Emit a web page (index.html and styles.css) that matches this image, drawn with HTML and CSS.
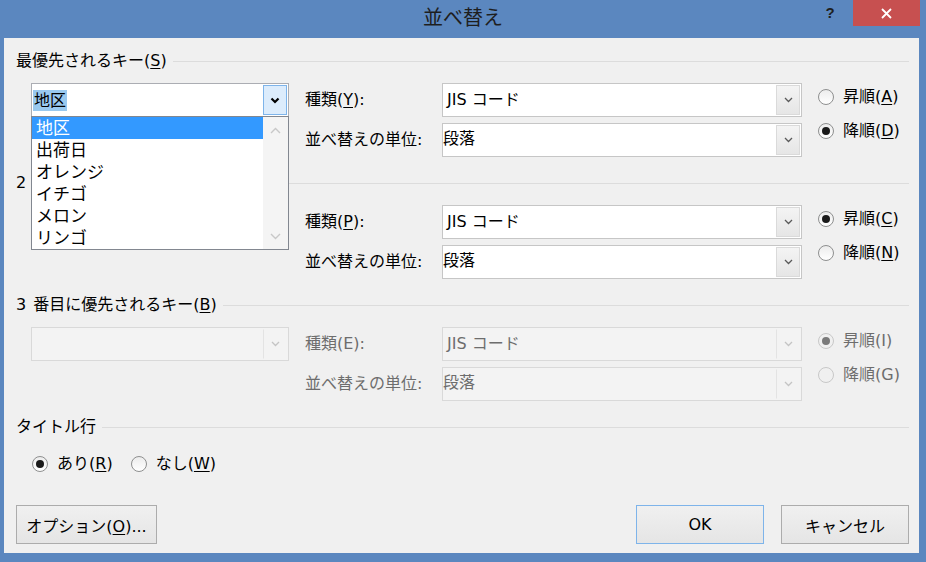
FILE: index.html
```html
<!DOCTYPE html>
<html lang="ja">

<head>
    <meta charset="UTF-8">
    <title>並べ替え</title>
    <link rel="stylesheet" href="styles.css">
</head>

<body>
    <div class="titlebar">
        <div></div>
        <div class="title">並べ替え</div>
        <div class="caption-buttons">
            <span class="help">?</span>
            <span class="close">
                <svg width="11" height="11" viewBox="0 0 11 11"><path d="M1 1L10 10M10 1L1 10" stroke="#fff" stroke-width="1.8" /></svg>
            </span>
        </div>
    </div>

    <div class="client">
        <!-- 1st key -->
        <section class="sort-key">
            <div class="group-heading"><span>最優先されるキー(<u>S</u>)</span></div>
            <div class="key-grid">
                <div class="combo combo-focus key-column">
                    <div class="combo-value"><span class="selected-text">地区</span></div>
                    <div class="combo-arrow">
                        <svg width="10" height="7" viewBox="0 0 10 7"><path d="M1.5 1.5l3.5 3.5l3.5-3.5" fill="none" stroke="currentColor" stroke-width="2.2" /></svg>
                    </div>
                    <div class="dropdown-list">
                        <div class="list-items">
                            <div class="list-item active">地区</div>
                            <div class="list-item">出荷日</div>
                            <div class="list-item">オレンジ</div>
                            <div class="list-item">イチゴ</div>
                            <div class="list-item">メロン</div>
                            <div class="list-item">リンゴ</div>
                        </div>
                        <div class="list-scroll">
                            <svg width="11" height="7" viewBox="0 0 11 7"><path d="M1 6l4.5-4.5L10 6" fill="none" stroke="#c8c8c8" stroke-width="1.4" /></svg>
                            <svg width="11" height="7" viewBox="0 0 11 7"><path d="M1 1l4.5 4.5L10 1" fill="none" stroke="#c8c8c8" stroke-width="1.4" /></svg>
                        </div>
                    </div>
                </div>
                <div class="field-label">種類(<u>Y</u>):</div>
                <div class="combo">
                    <div class="combo-value">JIS コード</div>
                    <div class="combo-arrow"><svg width="9" height="6" viewBox="0 0 9 6"><path d="M1 1l3.5 3.5L8 1" fill="none" stroke="currentColor" stroke-width="1.3" /></svg></div>
                </div>
                <div class="order-options">
                    <div class="radio"><span class="radio-mark"></span>昇順(<u>A</u>)</div>
                    <div class="radio checked"><span class="radio-mark"></span>降順(<u>D</u>)</div>
                </div>
                <div class="field-label">並べ替えの単位:</div>
                <div class="combo">
                    <div class="combo-value flush">段落</div>
                    <div class="combo-arrow"><svg width="9" height="6" viewBox="0 0 9 6"><path d="M1 1l3.5 3.5L8 1" fill="none" stroke="currentColor" stroke-width="1.3" /></svg></div>
                </div>
            </div>
        </section>

        <!-- 2nd key -->
        <section class="sort-key">
            <div class="group-heading"><span>2 番目に優先されるキー(<u>T</u>)</span></div>
            <div class="key-grid">
                <div class="combo key-column">
                    <div class="combo-value">出荷日</div>
                    <div class="combo-arrow"><svg width="9" height="6" viewBox="0 0 9 6"><path d="M1 1l3.5 3.5L8 1" fill="none" stroke="currentColor" stroke-width="1.3" /></svg></div>
                </div>
                <div class="field-label">種類(<u>P</u>):</div>
                <div class="combo">
                    <div class="combo-value">JIS コード</div>
                    <div class="combo-arrow"><svg width="9" height="6" viewBox="0 0 9 6"><path d="M1 1l3.5 3.5L8 1" fill="none" stroke="currentColor" stroke-width="1.3" /></svg></div>
                </div>
                <div class="order-options">
                    <div class="radio checked"><span class="radio-mark"></span>昇順(<u>C</u>)</div>
                    <div class="radio"><span class="radio-mark"></span>降順(<u>N</u>)</div>
                </div>
                <div class="field-label">並べ替えの単位:</div>
                <div class="combo">
                    <div class="combo-value flush">段落</div>
                    <div class="combo-arrow"><svg width="9" height="6" viewBox="0 0 9 6"><path d="M1 1l3.5 3.5L8 1" fill="none" stroke="currentColor" stroke-width="1.3" /></svg></div>
                </div>
            </div>
        </section>

        <!-- 3rd key (disabled) -->
        <section class="sort-key">
            <div class="group-heading"><span>3 番目に優先されるキー(<u>B</u>)</span></div>
            <div class="key-grid disabled">
                <div class="combo key-column">
                    <div class="combo-value"></div>
                    <div class="combo-arrow"><svg width="9" height="6" viewBox="0 0 9 6"><path d="M1 1l3.5 3.5L8 1" fill="none" stroke="currentColor" stroke-width="1.3" /></svg></div>
                </div>
                <div class="field-label">種類(E):</div>
                <div class="combo">
                    <div class="combo-value">JIS コード</div>
                    <div class="combo-arrow"><svg width="9" height="6" viewBox="0 0 9 6"><path d="M1 1l3.5 3.5L8 1" fill="none" stroke="currentColor" stroke-width="1.3" /></svg></div>
                </div>
                <div class="order-options">
                    <div class="radio checked"><span class="radio-mark"></span>昇順(I)</div>
                    <div class="radio"><span class="radio-mark"></span>降順(G)</div>
                </div>
                <div class="field-label">並べ替えの単位:</div>
                <div class="combo">
                    <div class="combo-value flush">段落</div>
                    <div class="combo-arrow"><svg width="9" height="6" viewBox="0 0 9 6"><path d="M1 1l3.5 3.5L8 1" fill="none" stroke="currentColor" stroke-width="1.3" /></svg></div>
                </div>
            </div>
        </section>

        <!-- header row -->
        <section>
            <div class="group-heading"><span>タイトル行</span></div>
            <div class="title-row">
                <div class="radio checked"><span class="radio-mark"></span>あり(<u>R</u>)</div>
                <div class="radio"><span class="radio-mark"></span>なし(<u>W</u>)</div>
            </div>
        </section>

        <div class="footer">
            <button class="btn btn-options">オプション(<u>O</u>)...</button>
            <div class="footer-right">
                <button class="btn btn-wide btn-default">OK</button>
                <button class="btn btn-wide">キャンセル</button>
            </div>
        </div>
    </div>
</body>

</html>
```

FILE: styles.css
```css
body {
    margin: 0;
    width: 926px;
    height: 562px;
    overflow: hidden;
    background-color: #5b87bf;
    font-family: "DejaVu Sans", "Noto Sans CJK JP", sans-serif;
    font-size: 16px;
    line-height: 20px;
    color: #000;
}

u {
    text-underline-offset: 2px;
}

.titlebar {
    display: grid;
    grid-template-columns: 1fr auto 1fr;
    height: 38px;
}

.title {
    font-size: 20px;
    line-height: 36px;
    color: #1e1e1e;
}

.caption-buttons {
    display: flex;
    justify-content: flex-end;
    align-items: flex-start;
}

.help {
    width: 26px;
    height: 26px;
    margin-right: 10px;
    line-height: 25px;
    text-align: center;
    font-family: "Liberation Sans", sans-serif;
    font-weight: bold;
    font-size: 15px;
    color: #1e1e1e;
}

.close {
    width: 67px;
    height: 26px;
    margin-right: 6px;
    background-color: #c75050;
    display: flex;
    align-items: center;
    justify-content: center;
}

.client {
    height: 515px;
    margin: 0 7px 0 4px;
    padding: 13px 10px 0 12px;
    box-sizing: border-box;
    background-color: #f0f0f0;
}

.group-heading {
    display: flex;
    align-items: center;
    height: 20px;
    word-spacing: 2px;
}

.group-heading::after {
    content: "";
    flex: 1;
    height: 1px;
    margin-left: 6px;
    background-color: #dcdcdc;
}

.sort-key {
    margin-bottom: 16px;
}

.key-grid {
    display: grid;
    grid-template-columns: 258px 153px 360px 1fr;
    grid-template-rows: 34px 34px;
    row-gap: 6px;
    margin: 12px 0 0 15px;
}

.key-column {
    grid-column: 1;
    grid-row: 1;
}

.field-label {
    grid-column: 2;
    display: flex;
    align-items: center;
    padding-left: 16px;
}

.order-options {
    grid-column: 4;
    grid-row: 1 / span 2;
    display: flex;
    flex-direction: column;
    gap: 14px;
    padding: 4px 0 0 16px;
}

/* combo boxes */
.combo {
    position: relative;
    display: flex;
    box-sizing: border-box;
    border: 1px solid #c6c6c6;
    background-color: #fff;
}

.combo-value {
    flex: 1;
    display: flex;
    align-items: center;
    padding-left: 4px;
    white-space: nowrap;
}

.combo-value.flush {
    padding-left: 0;
    padding-bottom: 2px;
}

.combo-arrow {
    width: 22px;
    margin: 1px;
    border: 1px solid #dadada;
    background: linear-gradient(#f4f4f4, #e6e6e6);
    display: flex;
    align-items: center;
    justify-content: center;
    color: #5a5a5a;
}

.combo-focus {
    border-color: #abadb3;
}

.combo-focus .combo-value {
    padding-left: 1px;
}

.combo-focus .combo-arrow {
    background: #dcecfc;
    border-color: #7eb4ea;
    color: #000;
}

.selected-text {
    display: inline-block;
    line-height: 21px;
    padding: 0 1px;
    background-color: #99c9ef;
}

.dropdown-list {
    position: absolute;
    top: 100%;
    left: -1px;
    z-index: 10;
    width: 258px;
    box-sizing: border-box;
    display: flex;
    border: 1px solid #828790;
    background-color: #fff;
}

.list-items {
    flex: 1;
}

.list-item {
    height: 22px;
    line-height: 22px;
    padding-left: 4px;
    font-size: 17px;
}

.list-item.active {
    background-color: #3399ff;
    color: #fff;
}

.list-scroll {
    width: 25px;
    background-color: #f4f4f4;
    display: flex;
    flex-direction: column;
    justify-content: space-between;
    align-items: center;
    padding: 10px 0 9px;
}

/* radio buttons */
.radio {
    display: flex;
    align-items: center;
    height: 20px;
    white-space: nowrap;
}

.radio-mark {
    position: relative;
    width: 14px;
    height: 14px;
    margin-right: 9px;
    border: 1px solid #8e8f8f;
    border-radius: 50%;
    background: linear-gradient(#ececec, #fff);
}

.radio.checked .radio-mark::after {
    content: "";
    position: absolute;
    inset: 3px;
    border-radius: 50%;
    background-color: #1a1a1a;
}

/* disabled key */
.disabled {
    color: #6d6d6d;
}

.disabled .combo {
    border-color: #d9d9d9;
    background-color: #f3f3f3;
}

.disabled .combo-arrow {
    background: transparent;
    border-color: transparent transparent transparent #e3e3e3;
    color: #c4c4c4;
}

.disabled .radio-mark {
    border-color: #c8c8c8;
    background: #f0f0f0;
}

.disabled .radio.checked .radio-mark::after {
    background-color: #7a7a7a;
}

.title-row {
    display: flex;
    gap: 18px;
    margin: 17px 0 0 16px;
}

/* buttons */
.footer {
    display: flex;
    margin-top: 31px;
}

.footer-right {
    display: flex;
    gap: 17px;
    margin-left: auto;
}

.btn {
    height: 39px;
    padding: 0;
    border: 1px solid #acacac;
    background: linear-gradient(#f0f0f0, #e5e5e5);
    font-family: inherit;
    font-size: 16px;
    color: #000;
}

.btn-options {
    width: 141px;
}

.btn-wide {
    width: 128px;
}

.btn-default {
    border-color: #7eb4ea;
}
```
